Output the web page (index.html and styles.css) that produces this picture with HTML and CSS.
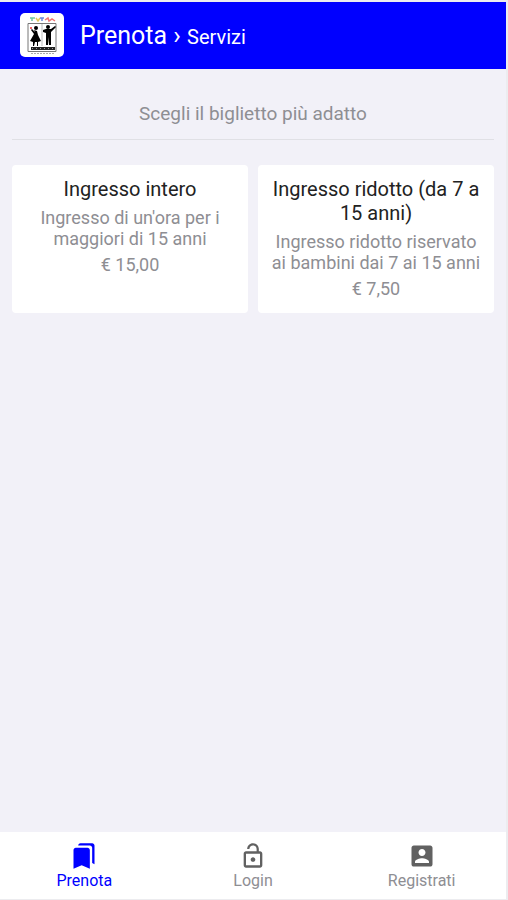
FILE: index.html
```html
<!DOCTYPE html>
<html lang="it">
<head>
  <meta charset="UTF-8" />
  <meta name="viewport" content="width=device-width, initial-scale=1" />
  <title>Prenota › Servizi</title>
  <link rel="stylesheet" href="styles.css">
</head>
<body>

  <header class="topbar">
    <svg class="logo" viewBox="0 0 44 44" aria-hidden="true">
      <rect width="44" height="44" rx="5" fill="#fff" />
      <g fill="none" stroke-width="1.500">
        <path d="M10 5h5M12 5v3" stroke="#6fc8a4" />
        <path d="M16 5l2 3 2-3" stroke="#e5c85c" />
        <path d="M20 5h4M22 5v3" stroke="#6989df" />
        <path d="M25 7l3-2 1 3 3-2 3 2" stroke="#ef7474" />
      </g>
      <path d="M8 10.500h28v28H8z" fill="#fff" stroke="#777" />
      <path d="M22 11v22" stroke="#bbb" />
      <!-- dancers -->
      <circle cx="16" cy="15" r="2" />
      <path d="M14 17l3 1 1 4 3 6-3 1v4h-1v-4h-2l-1 4h-1v-4l-3-1 4-7-3-4 1-1 3 3z" />
      <circle cx="28" cy="14" r="2" />
      <path d="M26 16h5l4-3 1 1-5 5v13h-2v-8l-1 8h-2V20l-3-1v-2z" />
      <circle cx="11" cy="15" r="1" fill="#e33" />
      <path d="M11 34h24v3H11z" fill="#222" />
      <path d="M12 35.500h21" stroke="#999" stroke-dasharray="1 3" />
      <path d="M11 40.500h23" stroke="#aaa" stroke-dasharray="2 1" />
    </svg>
    <h1>Prenota › <small>Servizi</small></h1>
  </header>

  <main>
    <h2>Scegli il biglietto più adatto</h2>
    <div class="cards">
      <a class="card" href="#intero">
        <h3>Ingresso intero</h3>
        <p>Ingresso di un'ora per i maggiori di 15 anni</p>
        <p class="price">€ 15,00</p>
      </a>
      <a class="card" href="#ridotto">
        <h3>Ingresso ridotto (da 7 a 15 anni)</h3>
        <p>Ingresso ridotto riservato ai bambini dai 7 ai 15 anni</p>
        <p class="price">€ 7,50</p>
      </a>
    </div>
  </main>

  <nav class="tabs">
    <a class="tab active" href="#prenota">
      <svg viewBox="0 0 24 24" aria-hidden="true"><path d="M19 18l2 1V3c0-1.100-.9-2-2-2H8.990C7.890 1 7 1.900 7 3h10c1.100 0 2 .9 2 2v13zM15 5H5c-1.100 0-2 .9-2 2v16l7-3 7 3V7c0-1.100-.9-2-2-2z" /></svg>
      <span>Prenota</span>
    </a>
    <a class="tab" href="#login">
      <svg viewBox="0 0 24 24" aria-hidden="true"><path d="M12 17c1.100 0 2-.9 2-2s-.9-2-2-2-2 .9-2 2 .9 2 2 2zm6-9h-1V6c0-2.760-2.240-5-5-5S7 3.240 7 6h1.900c0-1.710 1.390-3.100 3.100-3.100 1.710 0 3.100 1.390 3.100 3.100v2H6c-1.100 0-2 .9-2 2v10c0 1.100.9 2 2 2h12c1.100 0 2-.9 2-2V10c0-1.100-.9-2-2-2zm0 12H6V10h12v10z" /></svg>
      <span>Login</span>
    </a>
    <a class="tab" href="#registrati">
      <svg viewBox="0 0 24 24" aria-hidden="true"><path d="M3 5v14c0 1.100.89 2 2 2h14c1.100 0 2-.9 2-2V5c0-1.100-.9-2-2-2H5c-1.110 0-2 .9-2 2zm12 4c0 1.660-1.340 3-3 3s-3-1.340-3-3 1.340-3 3-3 3 1.340 3 3zm-9 8c0-2 4-3.100 6-3.100s6 1.100 6 3.100v1H6v-1z" /></svg>
      <span>Registrati</span>
    </a>
  </nav>

</body>
</html>
```
FILE: styles.css
```css
* {
  box-sizing: border-box;
}

body {
  margin: 0;
  min-height: 100vh;
  display: flex;
  flex-direction: column;
  border: solid #ececef;
  border-width: 2px 2px 1px 0;
  background: #f2f1f8;
  font-family: Roboto, sans-serif;
  color: #8e8e93;
}

h1, h2, h3, p {
  margin: 0;
  font-weight: 400;
}

a {
  color: inherit;
  text-decoration: none;
}

.topbar {
  display: flex;
  align-items: center;
  gap: 16px;
  padding: 11px 20px 12px;
  background: #0000ff;
  color: #fff;
}

.logo {
  width: 44px;
  height: 44px;
}

h1 {
  padding-top: 2px;
  font-size: 25px;
  line-height: 32px;
}

h1 small {
  font-size: 20px;
}

main {
  flex: 1;
  padding: 33px 12px;
}

h2 {
  padding-bottom: 13px;
  border-bottom: 1px solid #e0e0e5;
  font-size: 19px;
  line-height: 24px;
  text-align: center;
}

.cards {
  display: grid;
  grid-template-columns: 1fr 1fr;
  gap: 10px;
  margin-top: 25px;
}

.card {
  padding: 12px 12px 14px;
  border-radius: 4px;
  background: #fff;
  text-align: center;
}

.card h3 {
  color: #222;
  font-size: 20px;
  line-height: 24px;
}

.card p {
  margin-top: 6px;
  font-size: 18px;
  line-height: 21px;
}

.card .price {
  margin-top: 5px;
}

.tabs {
  display: grid;
  grid-template-columns: repeat(3, 1fr);
  background: #fff;
}

.tab {
  display: flex;
  flex-direction: column;
  align-items: center;
  gap: 1px;
  padding: 10px 0 8px;
  font-size: 16px;
  line-height: 20px;
}

.tab svg {
  width: 28px;
  height: 28px;
  fill: #616161;
}

.active {
  color: #0000ff;
}

.active svg {
  fill: #0000ff;
}
```
